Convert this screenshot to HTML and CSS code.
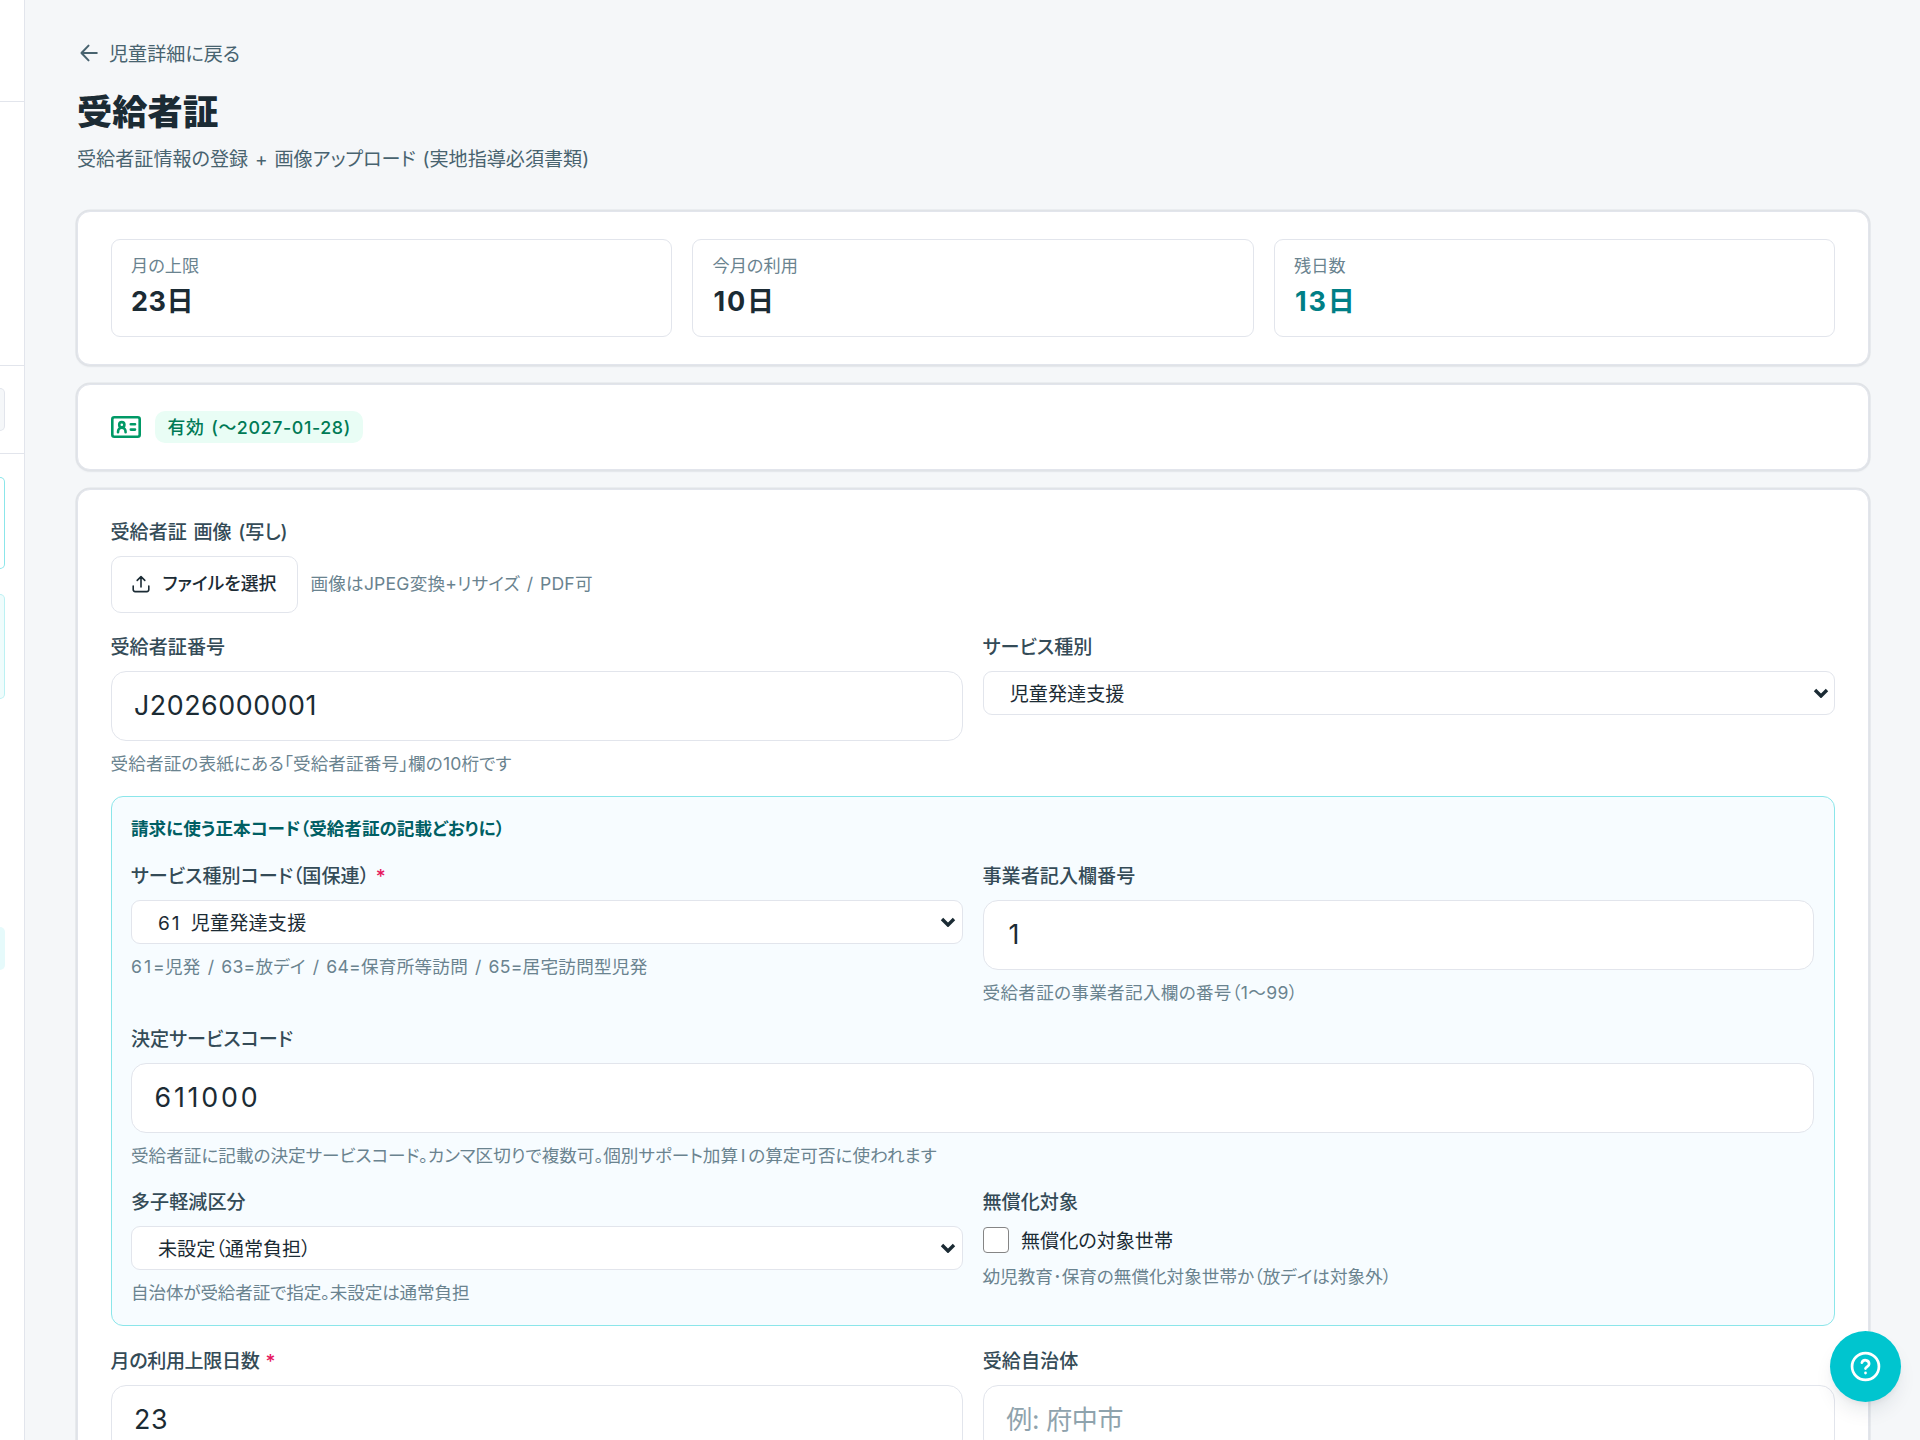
FILE: index.html
```html
<!DOCTYPE html>
<html lang="ja">
<head>
<meta charset="utf-8">
<title>受給者証</title>
<link rel="stylesheet" href="styles.css">
</head>
<body>
<div class="app">
  <aside class="sidebar">
    <div class="side-brand"></div>
    <div class="side-profile"></div>
    <div class="side-search"><div class="side-field"></div></div>
    <div class="side-nav">
      <div class="side-card side-card-active"></div>
      <div class="side-card side-card-soft"></div>
      <div class="side-pill"></div>
    </div>
  </aside>
  <main class="main">
    <a class="back">
      <svg class="back-icon" viewBox="0 0 24 24"><path d="M20.5 12H4M11.5 4 3.8 12l7.7 8"/></svg>
      <span>児童詳細に戻る</span>
    </a>
    <h1 class="title">受給者証</h1>
    <p class="subtitle">受給者証情報の登録 + 画像アップロード (実地指導必須書類)</p>

    <section class="card stats">
      <div class="stat"><div class="stat-label">月の上限</div><div class="stat-value">23日</div></div>
      <div class="stat"><div class="stat-label">今月の利用</div><div class="stat-value stat-wide">10日</div></div>
      <div class="stat"><div class="stat-label">残日数</div><div class="stat-value stat-wide stat-accent">13日</div></div>
    </section>

    <section class="card status">
      <svg class="id-icon" viewBox="0 0 30 22">
        <rect x="1.3" y="1.3" width="27.4" height="19.4" rx="2"/>
        <circle cx="10.8" cy="8.7" r="2.6"/>
        <path d="M7 16.2c0-2.6 1.6-4.6 3.8-4.6s3.8 2 3.8 4.6M19.8 8.3h4.2M19.8 13.6h4.2"/>
      </svg>
      <span class="badge">有効 (～2027-01-28)</span>
    </section>

    <section class="card form">
      <div class="field">
        <div class="label">受給者証 画像 (写し)</div>
        <div class="upload">
          <button class="file-button">
            <svg class="upload-icon" viewBox="0 0 18 18"><path d="M9 12V1.8M5.2 5.4 9 1.6l3.8 3.8M1.2 11v3.6a2 2 0 0 0 2 2h11.6a2 2 0 0 0 2-2V11"/></svg>
            <span class="file-text">ファイルを選択</span>
          </button>
          <span class="help upload-help">画像はJPEG変換+リサイズ / PDF可</span>
        </div>
      </div>

      <div class="row">
        <div class="field">
          <div class="label">受給者証番号</div>
          <input class="input" value="J2026000001">
          <div class="help help-number">受給者証の表紙にある「受給者証番号」欄の10桁です</div>
        </div>
        <div class="field">
          <div class="label">サービス種別</div>
          <div class="select"><span>児童発達支援</span><svg class="chevron" viewBox="0 0 16 10"><path d="M2 2l6 6 6-6"/></svg></div>
        </div>
      </div>

      <div class="codes">
        <div class="codes-title">請求に使う正本コード（受給者証の記載どおりに）</div>
        <div class="row">
          <div class="field">
            <div class="label">サービス種別コード（国保連） <span class="required">*</span></div>
            <div class="select"><span class="code-option"><span class="code-digits">61</span> 児童発達支援</span><svg class="chevron" viewBox="0 0 16 10"><path d="M2 2l6 6 6-6"/></svg></div>
            <div class="help help-codes"><span class="code-digits">61</span>=児発 / 63=放デイ / 64=保育所等訪問 / 65=居宅訪問型児発</div>
          </div>
          <div class="field">
            <div class="label">事業者記入欄番号</div>
            <input class="input input-single" value="1">
            <div class="help help-range">受給者証の事業者記入欄の番号（1～99）</div>
          </div>
        </div>
        <div class="field">
          <div class="label">決定サービスコード</div>
          <input class="input input-code" value="611000">
          <div class="help">受給者証に記載の決定サービスコード。カンマ区切りで複数可。個別サポート加算<span class="roman">Ⅰ</span>の算定可否に使われます</div>
        </div>
        <div class="row">
          <div class="field">
            <div class="label">多子軽減区分</div>
            <div class="select"><span>未設定（通常負担）</span><svg class="chevron" viewBox="0 0 16 10"><path d="M2 2l6 6 6-6"/></svg></div>
            <div class="help help-tight">自治体が受給者証で指定。未設定は通常負担</div>
          </div>
          <div class="field">
            <div class="label">無償化対象</div>
            <label class="check"><span class="box"></span><span>無償化の対象世帯</span></label>
            <div class="help">幼児教育･保育の無償化対象世帯か（放デイは対象外）</div>
          </div>
        </div>
      </div>

      <div class="row">
        <div class="field">
          <div class="label label-tight">月の利用上限日数 <span class="required">*</span></div>
          <input class="input" value="23">
        </div>
        <div class="field">
          <div class="label">受給自治体</div>
          <input class="input" placeholder="例: 府中市">
        </div>
      </div>
    </section>
  </main>
</div>
<button class="help-fab">
  <svg class="fab-icon" viewBox="0 0 24 24"><circle cx="12" cy="12" r="10.4"/><path d="M9.2 9a2.9 2.9 0 0 1 5.6 1c0 1.9-2.8 2.4-2.8 3.6"/><path d="M12 17v.1"/></svg>
</button>
</body>
</html>
```
FILE: styles.css
```css
* { box-sizing: border-box; }
body {
  margin: 0;
  height: 1440px;
  overflow: hidden;
  background: #f5f7f9;
  color: #1b2b34;
  font-family: Inter, "Noto Sans CJK JP", sans-serif;
  font-feature-settings: "palt";
  font-size: 19.1px;
  word-spacing: 1.5px;
}
button, input { font: inherit; color: inherit; font-feature-settings: inherit; }
svg { fill: none; stroke: currentColor; stroke-linecap: round; stroke-linejoin: round; flex: none; }

.app { display: flex; height: 1440px; overflow: hidden; }

.sidebar { width: 25px; flex: none; background: #fff; border-right: 1px solid #e2e5ec; display: flex; flex-direction: column; }
.side-brand { height: 102px; border-bottom: 1px solid #e2e5ec; }
.side-profile { height: 264px; border-bottom: 1px solid #e2e5ec; }
.side-search { height: 88px; padding-top: 22px; border-bottom: 1px solid #e2e5ec; }
.side-field { width: 5px; height: 43px; background: #f5f7f9; border: 1px solid #e2e5ec; border-left: 0; border-radius: 0 10px 10px 0; }
.side-nav { padding-top: 23px; display: flex; flex-direction: column; }
.side-card { width: 5px; border: 1px solid #8be6ea; border-left: 0; border-radius: 0 12px 12px 0; }
.side-card-active { height: 92px; margin-bottom: 25px; }
.side-card-soft { height: 105px; margin-bottom: 228px; background: #effcfc; border-color: #bcf1f3; }
.side-pill { width: 5px; height: 43px; background: #e6fafb; border-radius: 0 10px 10px 0; }

.main { flex: 1; padding: 39px 51px 0 52px; display: flex; flex-direction: column; }
.back { display: flex; align-items: center; gap: 9px; height: 28px; padding-left: 1px; color: #48636f; }
.back-icon { width: 22px; height: 22px; stroke-width: 2.2; }
.title { margin: 20px 0 0; font-size: 35.3px; line-height: 52px; font-weight: 800; }
.subtitle { margin: 6px 0 38px; line-height: 28px; color: #48636f; }

.card { flex: none; background: #fff; border: 1px solid #e2e5ec; border-radius: 13px; box-shadow: 0 0 0 1.6px #e0e3e7, 0 1px 2px 1px rgba(20, 40, 60, .06); margin-bottom: 19px; padding: 27px 33px 27px 32.5px; }

.stats { display: grid; grid-template-columns: repeat(3, 1fr); gap: 20px; height: 154px; }
.stat { border: 1px solid #e2e5ec; border-radius: 9px; padding: 13px 19.5px 0; }
.stat-label { font-size: 17.2px; line-height: 26px; color: #6a838f; }
.stat-value { font-size: 27px; line-height: 36px; font-weight: 700; margin-top: 4.5px; letter-spacing: .5px; }
.stat-wide { padding-left: 1px; letter-spacing: 1.8px; }
.stat-accent { color: #007f86; }

.status { display: flex; align-items: center; gap: 14px; height: 86px; }
.id-icon { width: 30px; height: 22px; stroke-width: 2.6; color: #009966; }
.badge { height: 32px; width: 208px; padding: 0 0 0 13px; border-radius: 10px; background: #e9fdf5; color: #007a55; font-size: 17.85px; line-height: 33px; font-weight: 500; letter-spacing: .6px; white-space: nowrap; }

.form { display: flex; flex-direction: column; gap: 20.4px; padding-top: 27.5px; }
.row { display: grid; grid-template-columns: 1fr 1fr; gap: 20px; }
.field { display: flex; flex-direction: column; gap: 10px; min-width: 0; }
.label { line-height: 28px; font-weight: 500; color: #344b57; }
.label-tight { letter-spacing: -.4px; }
.required { color: #e6185f; font-weight: 500; }
.help { font-size: 17.6px; line-height: 25px; color: #6a838f; white-space: nowrap; }
.help-codes { letter-spacing: .25px; word-spacing: 1.8px; }
.help-number { letter-spacing: .12px; }
.help-range { letter-spacing: .3px; }
.help-tight { letter-spacing: -.15px; }
.code-digits { letter-spacing: 2px; }
.code-option { word-spacing: 3.5px; letter-spacing: .2px; }
.roman { padding: 0 2.7px; }

.upload { display: flex; align-items: center; gap: 13px; }
.upload-help { letter-spacing: .2px; padding-bottom: 2px; }
.file-button { display: flex; align-items: center; gap: 13px; width: 187px; height: 57px; padding: 0 0 0 20px; background: #fff; border: 1px solid #e2e5ec; border-radius: 10px; font-size: 17.85px; font-weight: 500; }
.file-text { padding-bottom: 4px; }
.upload-icon { width: 18px; height: 18px; stroke-width: 1.6; }

.input { width: 100%; height: 69.7px; padding: 0 22.5px 1px; background: #fff; border: 1px solid #e2e5ec; border-radius: 15px; font-size: 26.8px; letter-spacing: .55px; outline: none; }
.input-code { letter-spacing: 2.8px; }
.input-single { padding-left: 25px; }
.input::placeholder { color: #8fa3ad; opacity: 1; font-size: 26px; letter-spacing: -.3px; }
.select { display: flex; align-items: center; justify-content: space-between; height: 44.2px; padding: 0 5.5px 0 26px; background: #fff; border: 1px solid #e2e5ec; border-radius: 9px; }
.chevron { width: 16px; height: 10px; stroke-width: 3.4; stroke-linecap: butt; stroke-linejoin: miter; }

.codes { display: flex; flex-direction: column; gap: 20.4px; padding: 19.5px 20px 20px 19.5px; background: #f7fcff; border: 1px solid #8be6ea; border-radius: 12px; }
.codes-title { font-size: 17.6px; line-height: 25px; font-weight: 700; color: #005f64; }

.check { display: flex; align-items: center; gap: 12.5px; height: 28px; }
.box { width: 26px; height: 26px; background: #fff; border: 1.5px solid #858585; border-radius: 4px; }

.help-fab { position: fixed; left: 1830px; top: 1331px; width: 71px; height: 71px; padding: 0; border: 0; border-radius: 50%; background: #00c5cf; color: #fff; display: flex; align-items: center; justify-content: center; box-shadow: 0 12px 20px -4px rgba(20, 40, 60, .1), 0 4px 8px -3px rgba(20, 40, 60, .08); }
.fab-icon { width: 31px; height: 31px; stroke-width: 2.1; }
```
